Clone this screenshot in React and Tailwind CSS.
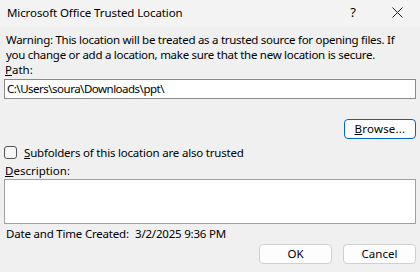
export default function App() {
  const font = { fontFamily: '"Noto Sans", "Open Sans", sans-serif' };
  return (
    <div className="w-[420px] h-[272px] bg-[#f0f0f0] text-[11.5px] text-black overflow-hidden flex flex-col" style={font}>
      <div className="h-[27px] shrink-0 bg-[#f3f3f3] flex items-center pl-[7px] pb-[2px]">
        <span className="text-[11.5px] leading-none whitespace-nowrap tracking-[-0.1px]">Microsoft Office Trusted Location</span>
        <span className="ml-auto mr-[11px] w-[20px] text-center text-[13px]">?</span>
        <span className="w-[46px] flex justify-center">
          <svg width="11" height="11" viewBox="0 0 11 11"><path d="M0.5 0.5L10.5 10.5M10.5 0.5L0.5 10.5" stroke="#222" strokeWidth="1" /></svg>
        </span>
      </div>
      <div className="flex flex-col px-[4px]">
        <p className="pl-[2px] pt-[5px] leading-[15px] tracking-[-0.28px]">
          Warning: This location will be treated as a trusted source for opening files. If you change or add a location, make sure that the new location is secure.
        </p>
        <div className="pl-[1px] leading-[15px]"><u>P</u>ath:</div>
        <div className="mt-[2px] h-[20px] bg-white border border-[#8a8a8a] flex items-center pl-[2px] leading-none tracking-[-0.5px] whitespace-nowrap">C:\Users\soura\Downloads\ppt\</div>
        <div className="flex justify-end mt-[20px]">
          <button className="w-[72px] h-[20px] bg-[#fdfdfd] border-[1.5px] border-[#0067c0] rounded-[4px] leading-none text-[11.5px] tracking-[0.2px]"><u>B</u>rowse...</button>
        </div>
        <div className="flex items-center mt-[7px] h-[13px]">
          <span className="w-[13px] h-[13px] border border-[#555] rounded-[3px] bg-[#f7f7f7]" />
          <span className="ml-[7px] whitespace-nowrap tracking-[-0.2px]"><u>S</u>ubfolders of this location are also trusted</span>
        </div>
        <div className="pl-[1px] mt-[4px] leading-[15px]"><u>D</u>escription:</div>
        <div className="mt-[1px] h-[45px] bg-white border border-[#a0a0a0]" />
        <div className="flex pl-[2px] mt-[2px] leading-[15px] whitespace-nowrap tracking-[-0.2px]">
          <span className="w-[129px]">Date and Time Created:</span>
          <span>3/2/2025 9:36 PM</span>
        </div>
        <div className="flex justify-end gap-[11px] mt-[3px]">
          <button className="w-[73px] h-[20px] bg-[#fdfdfd] border border-[#d0d0d0] rounded-[4px] leading-none text-[11.5px]">OK</button>
          <button className="w-[73px] h-[20px] bg-[#fdfdfd] border border-[#d0d0d0] rounded-[4px] leading-none text-[11.5px]">Cancel</button>
        </div>
      </div>
    </div>
  );
}
